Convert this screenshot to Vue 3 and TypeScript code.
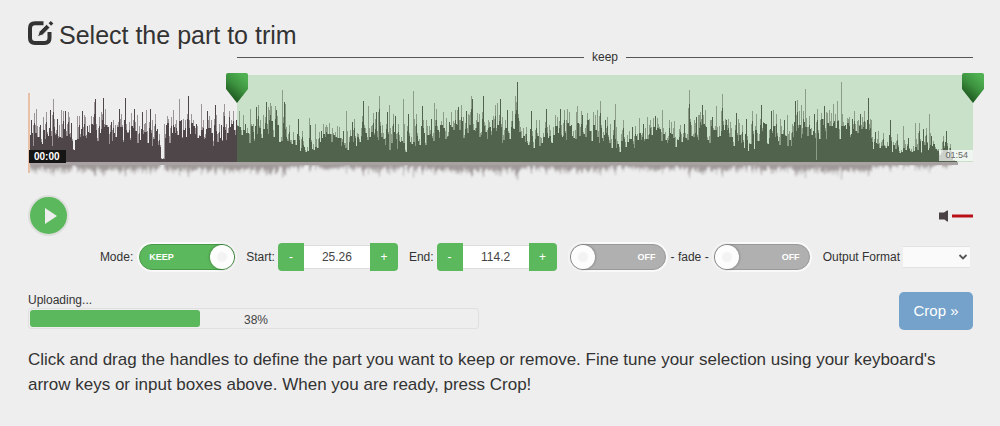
<script setup lang="ts">
import { computed, ref } from 'vue'

const DURATION = 114.2
const WAVE_WIDTH = 945
const BASE = 87

const start = ref('25.26')
const end = ref('114.2')
const keepMode = ref(true)
const fadeIn = ref(false)
const fadeOut = ref(false)
const format = ref('')
const progress = ref(38)

const percent = (value: string) => Math.min(100, Math.max(0, (Number(value) / DURATION) * 100))
const startPos = computed(() => percent(start.value))
const endPos = computed(() => percent(end.value))
const selectionStyle = computed(() => ({
  left: startPos.value + '%',
  width: endPos.value - startPos.value + '%',
}))

function step(target: 'start' | 'end', delta: number) {
  const field = target === 'start' ? start : end
  field.value = String(Math.round((Number(field.value) + delta) * 100) / 100)
}

// Peak samples as "position,level" pairs, three units per pixel; level 275 is silence.
const chunks: { offset: number; data: string }[] = [
  {
    offset: -8,
    data: '35,150 43,128 50,115 60,165 70,140 80,125 92,120 100,85 103,145 111,145 124,120 129,122 136,122 144,125 149,140 153,158 172,138 178,138 186,122 192,133 197,140 202,168 213,140 222,95 226,85 238,140 243,125 250,83 262,190 270,165 275,155 281,150 286,165 297,115 302,145 308,165 317,82 328,155 333,128 344,115 352,135 358,168 367,125 372,160 379,118 392,115 397,150 405,130 413,175 418,190 433,160 440,165 445,145 455,140 460,165 470,150 477,85 485,150 490,150 497,150 504,78 509,150 517,165 530,160 545,100 550,148 562,122 566,150 575,150 586,103 590,135 597,160 605,165 613,100 620,160 627,140',
  },
  {
    offset: 202,
    data: '5,160 11,122 18,150 28,165 40,135 45,160 61,117 70,160 79,110 85,105 90,148 109,95 114,110 120,98 139,120 143,145 157,60 163,95 167,100 178,165 205,145 217,183 238,142 242,165 255,160 267,185 275,183 290,165 308,173 340,182 350,123 360,180 366,155 372,145 385,190 399,92 414,107 430,128 440,125 448,76 457,165 472,125 478,105 490,130 496,137 505,160 521,87 536,132 551,63 560,132 577,107 580,150 590,150 603,145 614,98 618,115 630,165 640,160 648,143 657,155 665,145 675,120 686,110 694,108 700,140 709,122 715,130 724,76 728,85 740,150 747,130',
  },
  {
    offset: 452,
    data: '10,78 15,165 25,148 36,150 45,105 52,98 60,85 66,140 75,150 83,118 96,122 106,78 112,35 121,170 138,170 155,122 170,150 178,148 199,117 210,180 232,140 240,115 252,120 260,148 275,165 290,125 303,135 308,135 322,128 327,145 342,178 351,118 361,93 376,150 381,140 390,160 402,150 406,100 431,150 456,170 465,170 477,142 490,160 501,140 512,150 527,137 535,160 547,120 568,172 583,152 600,165 614,160 628,58 643,150 648,140 656,135 662,125 667,105 675,140 690,150 697,140 708,108 727,70 738,148 745,145',
  },
  {
    offset: 702,
    data: '2,155 19,127 25,145 37,165 50,145 67,122 80,132 94,103 101,155 107,160 124,122 138,130 150,145 162,150 173,133 188,160 197,93 202,90 214,105 220,145 226,57 237,137 253,130 262,117 270,148 282,108 289,125 302,152 314,152 325,150 335,35 347,165 355,145 359,140 367,145 373,122 385,150 392,130 397,140 404,122 415,83 420,145 424,148 435,185 445,182 460,188 480,150 502,190 519,168 535,202 557,157 568,158 580,175 590,173 598,132 603,198 625,235 640,198 649,182 660,220',
  },
]

const peaks = chunks.flatMap(({ offset, data }) =>
  data.split(' ').map((pair) => {
    const [x, level] = pair.split(',').map(Number)
    return { x: Math.floor(offset + x / 3), h: Math.round((275 - level) / 3) }
  }),
)

// Average loudness along the track, in pixels above the base line.
const envelope: [number, number][] = [
  [0, 24], [30, 28], [45, 18], [60, 34], [85, 26], [105, 30], [128, 24], [131, 3], [136, 3],
  [138, 30], [165, 38], [185, 24], [205, 34], [215, 28], [250, 34], [262, 18], [275, 13],
  [300, 24], [318, 15], [340, 28], [360, 18], [385, 16], [405, 30], [440, 32], [472, 28],
  [488, 40], [497, 16], [515, 26], [535, 30], [560, 36], [588, 14], [605, 22], [625, 28],
  [655, 18], [668, 32], [700, 30], [722, 14], [730, 32], [760, 24], [780, 34], [787, 3],
  [792, 36], [835, 28], [850, 16], [880, 12], [905, 14], [921, 6], [926, 1], [931, 0], [945, 0],
]

function loudness(x: number) {
  const i = Math.max(1, envelope.findIndex(([ex]) => ex >= x))
  const [x0, h0] = envelope[i - 1]
  const [x1, h1] = envelope[i]
  return h0 + ((h1 - h0) * (x - x0)) / (x1 - x0)
}

let seed = 17
function random() {
  seed = (seed * 16807) % 2147483647
  return seed / 2147483647
}

const solid: number[] = []
const soft: number[] = []
for (let x = 1; x < WAVE_WIDTH; x++) {
  if (x % 2 === 0) {
    solid[x] = solid[x - 1]
    soft[x] = solid[x]
  } else {
    solid[x] = Math.round(loudness(x) * (0.6 + random() * 0.7))
    soft[x] = Math.round(solid[x] * (1 + random() * 0.5))
  }
}

function raise(layer: number[], x: number, h: number) {
  layer[x] = Math.max(layer[x] || 0, Math.round(h))
}

peaks.forEach(({ x, h }, i) => {
  raise(soft, x, h)
  raise(soft, x + 1, h * 0.6)
  if (i % 2) {
    raise(soft, x - 1, h * 0.75)
    raise(solid, x, h * 0.8)
    raise(solid, x + 1, h * 0.55)
  }
  if (i % 3 === 0) {
    raise(solid, x, h)
    raise(solid, x - 1, h * 0.65)
    raise(solid, x + 1, h * 0.5)
  }
})

const bars = (heights: number[], scale = 1) =>
  heights.map((h, x) => (h > 0 ? `M${x} ${BASE}h1v${-h * scale}h-1z` : '')).join('')
const solidPath = bars(solid)
const softPath = bars(soft)
const echoPath = bars(soft, -0.22)
const echoSolidPath = bars(solid, -0.22)
</script>

<template>
  <main class="trimmer">
    <h1 class="title">
      <svg class="title-icon" viewBox="0 0 24 24" aria-hidden="true">
        <path d="M15.500 2.200H7Q2 2.200 2 7.200V17Q2 22 7 22H16.500Q21.500 22 21.500 17V11" fill="none" stroke="currentColor" stroke-width="4" />
        <path d="M9.500 15.800L11.300 10.500L18.600 3.200L22 6.600L14.700 13.900Z" fill="currentColor" />
        <path d="M20.600 2.200L22.800 0L25.300 2.500L23.100 4.700Z" fill="currentColor" />
      </svg>
      <span>Select the part to trim</span>
    </h1>

    <section class="editor" aria-label="Waveform">
      <div class="range" :style="{ marginLeft: startPos + '%', marginRight: 100 - endPos + '%' }">
        <span>keep</span>
      </div>
      <div class="wave">
        <svg class="wave-shape" viewBox="0 0 945 108" preserveAspectRatio="none" aria-hidden="true">
          <g class="echo">
            <path :d="echoPath" fill="#b5b0b0" />
            <path :d="echoSolidPath" fill="#a19a9a" />
          </g>
          <path d="M1 87H930V90H1Z" fill="#a8a2a2" />
          <path :d="softPath" fill="#9b9595" shape-rendering="crispEdges" />
          <path :d="solidPath" fill="#4e4648" shape-rendering="crispEdges" />
        </svg>
        <div class="selection" :style="selectionStyle"></div>
        <div class="cursor"></div>
        <span class="time time-now">00:00</span>
        <span class="time time-total">01:54</span>
        <svg
          v-for="(pos, i) in [startPos, endPos]"
          :key="i"
          class="handle"
          :style="{ left: pos + '%' }"
          viewBox="0 0 22 30"
          aria-hidden="true"
        >
          <defs>
            <linearGradient :id="'handle' + i" x1="0.8" y1="0.1" x2="0.3" y2="0.9">
              <stop offset="0" stop-color="#4fb052" />
              <stop offset="0.45" stop-color="#3d933f" />
              <stop offset="1" stop-color="#1d561f" />
            </linearGradient>
          </defs>
          <path d="M2 0H20Q22 0 22 2V16L11 30L0 16V2Q0 0 2 0Z" :fill="`url(#handle${i})`" />
        </svg>
      </div>
    </section>

    <div class="playback">
      <button class="play" type="button" aria-label="Play">
        <svg viewBox="0 0 12 16" aria-hidden="true"><path d="M0 0L12 8L0 16Z" fill="#eee" /></svg>
      </button>
      <button class="volume" type="button" aria-label="Volume">
        <svg viewBox="0 0 34 12" aria-hidden="true">
          <path d="M0 2.500H5L8 .5H9V11.500H8L5.500 9.500H0Z" fill="#4a4142" />
          <path d="M13 4.500H34V7.500H13Z" fill="#b81216" />
        </svg>
      </button>
    </div>

    <form class="controls" @submit.prevent>
      <label class="group mode">
        Mode:
        <span class="switch">
          <input v-model="keepMode" type="checkbox" />
          <span class="track">{{ keepMode ? 'KEEP' : 'REMOVE' }}</span>
        </span>
      </label>
      <div class="group">
        <label for="start">Start:</label>
        <div class="spinner">
          <button type="button" aria-label="Decrease start" @click="step('start', -0.1)">-</button>
          <input id="start" v-model="start" type="text" />
          <button type="button" aria-label="Increase start" @click="step('start', 0.1)">+</button>
        </div>
      </div>
      <div class="group">
        <label for="end">End:</label>
        <div class="spinner">
          <button type="button" aria-label="Decrease end" @click="step('end', -0.1)">-</button>
          <input id="end" v-model="end" type="text" />
          <button type="button" aria-label="Increase end" @click="step('end', 0.1)">+</button>
        </div>
      </div>
      <div class="group fades">
        <label class="switch">
          <input v-model="fadeIn" type="checkbox" aria-label="Fade in" />
          <span class="track">{{ fadeIn ? 'ON' : 'OFF' }}</span>
        </label>
        <span>- fade -</span>
        <label class="switch">
          <input v-model="fadeOut" type="checkbox" aria-label="Fade out" />
          <span class="track">{{ fadeOut ? 'ON' : 'OFF' }}</span>
        </label>
      </div>
      <div class="group format">
        <label for="format">Output Format</label>
        <span class="select">
          <select id="format" v-model="format">
            <option value=""></option>
            <option value="mp3">mp3</option>
            <option value="wav">wav</option>
          </select>
          <svg viewBox="0 0 10 6" aria-hidden="true"><path d="M1.500 1L5 4.500L8.500 1" fill="none" stroke="#555" stroke-width="1.8" /></svg>
        </span>
      </div>
    </form>

    <div class="actions">
      <div class="upload">
        <span id="upload-label">Uploading...</span>
        <div class="bar" role="progressbar" aria-labelledby="upload-label" :aria-valuenow="progress">
          <div class="fill" :style="{ width: progress + '%' }"></div>
          <span class="amount">{{ progress }}%</span>
        </div>
      </div>
      <button class="crop" type="button">Crop »</button>
    </div>

    <p class="help">
      Click and drag the handles to define the part you want to keep or remove. Fine tune your selection using your
      keyboard's arrow keys or input boxes above. When you are ready, press Crop!
    </p>
  </main>
</template>

<style>
body {
  background: #eee;
}
</style>

<style scoped>
.trimmer {
  padding: 21px 27px 24px 28px;
  background: #eee;
  color: #333;
  font: 12px/16px "Liberation Sans", Arial, sans-serif;
}
.trimmer *,
.trimmer *::before {
  box-sizing: border-box;
}
button,
input,
select {
  font: inherit;
  color: inherit;
  margin: 0;
  padding: 0;
  border: 0;
}
button {
  cursor: pointer;
}
.title {
  display: flex;
  align-items: center;
  gap: 7px;
  margin: 0;
  font-size: 25px;
  line-height: 28px;
  font-weight: 400;
}
.title-icon {
  width: 24px;
  height: 24px;
  margin-bottom: 4px;
  overflow: visible;
}
.title-icon path:nth-child(2) {
  stroke: #eee;
  stroke-width: 1;
}
.range {
  display: flex;
  align-items: center;
  gap: 8px;
}
.range::before,
.range::after {
  content: "";
  flex: 1;
  height: 1px;
  margin-top: 1px;
  background: #555;
}
.wave {
  position: relative;
  height: 108px;
  margin-top: 10px;
}
.wave-shape {
  display: block;
  width: 100%;
  height: 100%;
}
.echo {
  filter: blur(1px);
}
.selection {
  position: absolute;
  top: 0;
  height: 87px;
  background: rgba(92, 184, 92, 0.25);
}
.cursor {
  position: absolute;
  left: 0;
  top: 18px;
  width: 2px;
  height: 80px;
  background: #e8c0a6;
}
.time {
  position: absolute;
  top: 75px;
}
.time-now {
  left: 1px;
  padding: 0 6px 0 5px;
  background: #151515;
  color: #fff;
  font-size: 10px;
  font-weight: 700;
  line-height: 13px;
}
.time-total {
  right: 0;
  padding: 0 5px 0 6px;
  background: rgba(255, 255, 255, 0.7);
  color: #666;
  font-size: 9px;
  line-height: 11px;
}
.handle {
  position: absolute;
  top: -2px;
  width: 22px;
  height: 30px;
  margin-left: -11px;
}
.playback {
  display: flex;
  justify-content: space-between;
  align-items: center;
  margin-top: 12px;
}
.play {
  display: flex;
  align-items: center;
  justify-content: center;
  width: 41px;
  height: 41px;
  padding-left: 4px;
  border: 2px solid #dcdfdc;
  border-radius: 50%;
  background: #5cb85c;
}
.play svg {
  width: 12px;
  height: 16px;
}
.volume {
  background: none;
}
.volume svg {
  display: block;
  width: 34px;
  height: 12px;
}
.controls {
  display: flex;
  flex-wrap: wrap;
  justify-content: flex-end;
  gap: 11px;
  margin-top: 7px;
  padding-right: 3px;
}
.group {
  display: flex;
  align-items: center;
  gap: 3px;
  height: 28px;
}
.mode {
  gap: 6px;
}
.fades {
  gap: 5px;
  margin: 0 2px;
}
.switch {
  position: relative;
  display: block;
  cursor: pointer;
}
.switch input {
  position: absolute;
  inset: 0;
  width: 100%;
  height: 100%;
  opacity: 0;
}
.track {
  display: flex;
  align-items: center;
  flex-direction: row-reverse;
  justify-content: space-between;
  width: 96px;
  height: 26px;
  padding-right: 9px;
  border: 1px solid #999;
  border-radius: 13px;
  background: #b0b0b0;
  box-shadow: 0 0 0 2px #f9f9f9;
  color: #fff;
  font-size: 9px;
  font-weight: 700;
}
.track::after {
  content: "";
  width: 24px;
  height: 24px;
  border-radius: 50%;
  background: radial-gradient(circle, #f3f3f3 0 4px, #fdfdfd 6px);
  box-shadow: 0 0 3px rgba(0, 0, 0, 0.4);
}
.switch input:checked + .track {
  flex-direction: row;
  padding: 0 0 0 9px;
  border-color: #489a48;
  background: #5cb85c;
}
.switch input:focus-visible + .track {
  outline: 2px solid #66afe9;
}
.spinner {
  display: flex;
  align-items: center;
}
.spinner button {
  width: 26px;
  height: 28px;
  border-radius: 4px 0 0 4px;
  background: #5cb85c;
  color: #fff;
}
.spinner button:last-child {
  width: 28px;
  border-radius: 0 4px 4px 0;
}
.spinner input {
  width: 66px;
  height: 24px;
  padding-left: 10px;
  padding-right: 10px;
  border: 1px solid #ddd;
  border-width: 1px 0;
  background: #fff;
  color: #444;
  text-align: center;
}
.select {
  position: relative;
}
.select select {
  display: block;
  width: 67px;
  height: 22px;
  padding: 0 20px 0 4px;
  border: 1px solid #e2e2e2;
  border-width: 1px 0;
  border-radius: 0;
  background: #fafafa;
  appearance: none;
}
.select svg {
  position: absolute;
  right: 2px;
  top: 8px;
  width: 10px;
  height: 6px;
  pointer-events: none;
}
.actions {
  display: flex;
  justify-content: space-between;
  align-items: flex-start;
  margin-top: 21px;
}
.upload {
  width: 451px;
  max-width: 80%;
}
.bar {
  position: relative;
  height: 21px;
  padding: 1px;
  border: 1px solid #e0e0e0;
  border-radius: 3px;
}
.fill {
  height: 100%;
  border-radius: 3px;
  background: #5cb85c;
}
.amount {
  position: absolute;
  inset: 0;
  padding: 3px 0 0 5px;
  text-align: center;
  color: #444;
}
.crop {
  width: 74px;
  height: 38px;
  border-radius: 5px;
  background: #74a2ca;
  color: #fff;
  font-size: 15px;
}
.help {
  margin: 17px 0 0;
  font-size: 17px;
  line-height: 25px;
}
</style>
